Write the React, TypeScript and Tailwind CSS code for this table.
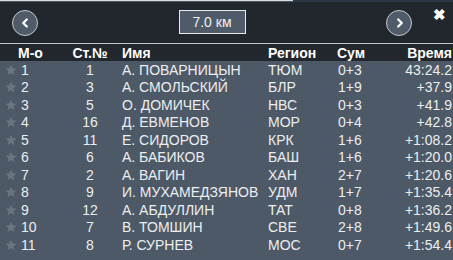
import { ChevronLeft, ChevronRight } from "lucide-react";

const rows = [
	["1", "1", "А. ПОВАРНИЦЫН", "ТЮМ", "0+3", "43:24.2"],
	["2", "3", "А. СМОЛЬСКИЙ", "БЛР", "1+9", "+37.9"],
	["3", "5", "О. ДОМИЧЕК", "НВС", "0+3", "+41.9"],
	["4", "16", "Д. ЕВМЕНОВ", "МОР", "0+4", "+42.8"],
	["5", "11", "Е. СИДОРОВ", "КРК", "1+6", "+1:08.2"],
	["6", "6", "А. БАБИКОВ", "БАШ", "1+6", "+1:20.0"],
	["7", "2", "А. ВАГИН", "ХАН", "2+7", "+1:20.6"],
	["8", "9", "И. МУХАМЕДЗЯНОВ", "УДМ", "1+7", "+1:35.4"],
	["9", "12", "А. АБДУЛЛИН", "ТАТ", "0+8", "+1:36.2"],
	["10", "7", "В. ТОМШИН", "СВЕ", "2+8", "+1:49.6"],
	["11", "8", "Р. СУРНЕВ", "МОС", "0+7", "+1:54.4"],
];

function Star() {
	return (
		<svg width="12" height="12" viewBox="0 0 24 24" className="fill-[#6a7581]">
			<path d="M12 1.5l3.2 7 7.6.8-5.7 5.1 1.6 7.5L12 18l-6.7 3.9 1.6-7.5L1.2 9.3l7.6-.8z" />
		</svg>
	);
}

function RoundButton({ dir }: { dir: "left" | "right" }) {
	return (
		<button className="w-[26px] h-[26px] rounded-full bg-[#4f5b69] border-[1.5px] border-[#c3c7cc] flex items-center justify-center text-white">
			{dir === "left" ? (
				<ChevronLeft size={14} strokeWidth={4} className="-ml-[1px]" />
			) : (
				<ChevronRight size={14} strokeWidth={4} className="ml-[1px]" />
			)}
		</button>
	);
}

export default function App() {
	return (
		<div className="w-[453px] h-[260px] overflow-hidden bg-[#4d5966] font-['Liberation_Sans',Arial,sans-serif]">
			{/* progress line */}
			<div className="flex h-[2px]">
				<div className="w-[293px] h-[1px] bg-[#d6d8da]" />
				<div className="flex-1 bg-[#2b3543]" />
			</div>
			<div className="flex h-[41px] bg-[#22262d] pl-[12px]">
				<div className="pt-[8px]">
					<RoundButton dir="left" />
				</div>
				<div className="flex-1 flex justify-center pt-[8px]">
					<div className="w-[67px] h-[24px] bg-[#4f5b69] border border-[#e8eaec] flex items-center justify-center text-[14px] text-[#eef0f2]">
						7.0 км
					</div>
				</div>
				<div className="pt-[8px]">
					<RoundButton dir="right" />
				</div>
				<div className="w-[41px] flex justify-end pr-[7px] pt-[5px]">
					<span className="text-white text-[15px] leading-none font-bold">✖</span>
				</div>
			</div>
			<div className="h-[1px] bg-[#c5c7ca]" />
			<div className="flex items-center h-[17px] bg-[#22262d] text-white font-bold text-[14px] leading-none">
				<div className="w-[70px] pl-[18px]">М-о</div>
				<div className="w-[40px] text-center">Ст.№</div>
				<div className="w-[158px] pl-[12px]">Имя</div>
				<div className="w-[69px]">Регион</div>
				<div className="w-[45px]">Сум</div>
				<div className="flex-1 text-right pr-[1px]">Время</div>
			</div>
			<div className="flex flex-col text-[14px] text-[#eceef0] leading-none">
				{rows.map((r) => (
					<div key={r[0]} className="flex items-center h-[17.5px]">
						<div className="w-[21px] pl-[5px] flex items-center">
							<Star />
						</div>
						<div className="w-[49px]">{r[0]}</div>
						<div className="w-[40px] text-center">{r[1]}</div>
						<div className="w-[158px] pl-[12px] whitespace-nowrap">{r[2]}</div>
						<div className="w-[69px]">{r[3]}</div>
						<div className="w-[45px] pl-[1px]">{r[4]}</div>
						<div className="flex-1 text-right pr-[1px]">{r[5]}</div>
					</div>
				))}
			</div>
		</div>
	);
}
